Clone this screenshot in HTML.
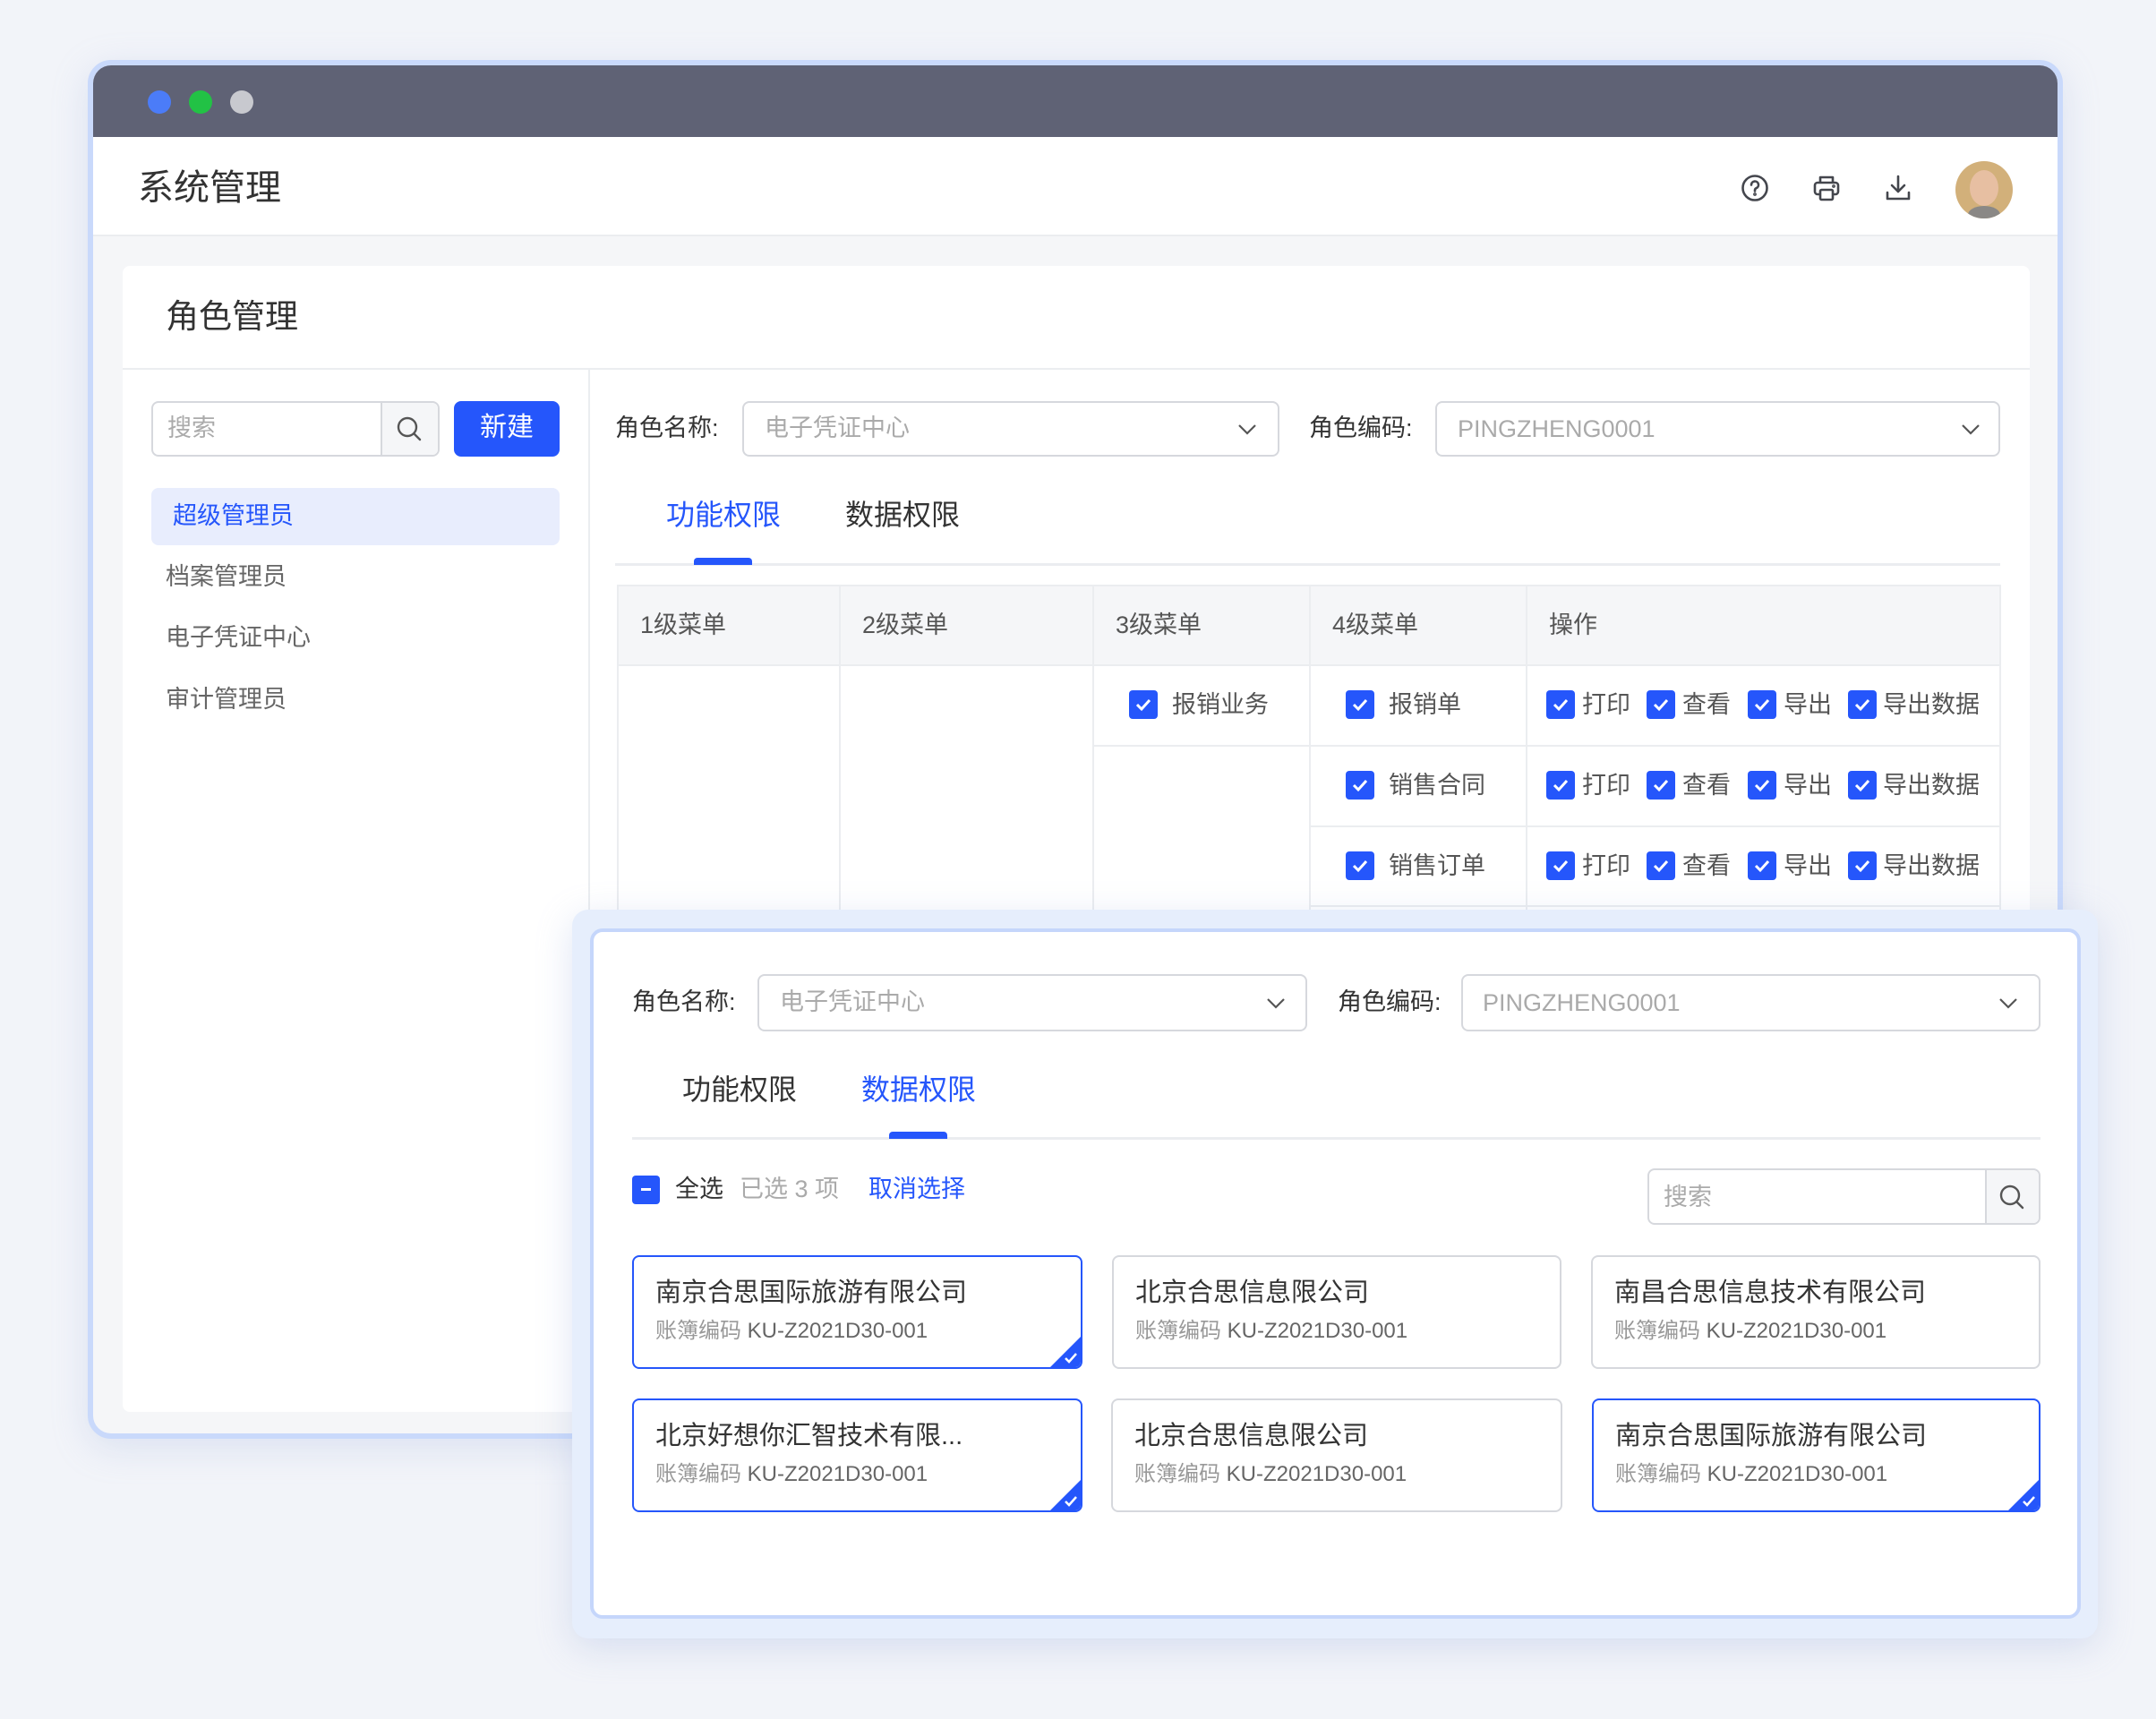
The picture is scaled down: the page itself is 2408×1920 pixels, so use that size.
<!DOCTYPE html>
<html><head><meta charset="utf-8">
<style>
*{box-sizing:border-box;margin:0;padding:0}
body{width:2408px;height:1920px;background:#f2f4f9;font-family:"Liberation Sans","Noto Sans CJK SC",sans-serif;position:relative;overflow:hidden;color:#333}
.a{position:absolute}
.t{position:absolute;white-space:nowrap;line-height:1}
.cb{position:absolute;width:32px;height:32px;background:#2556fb;border-radius:4px}
.cb svg{position:absolute;left:6px;top:7px}
.sel{position:absolute;border:2px solid #d6d8dd;border-radius:8px;background:#fff}
.card{position:absolute;border:2px solid #d6d8dd;border-radius:8px;background:#fff;overflow:hidden}
.card.on{border-color:#2556fb}
.card .n{position:absolute;left:24px;top:16px;font-size:29px;color:#333;white-space:nowrap}
.card .s{position:absolute;left:24px;top:62px;font-size:24px;color:#999;white-space:nowrap}
.card .s b{font-weight:normal;color:#666}
.tri{position:absolute;right:0;bottom:0;width:0;height:0;border-left:34px solid transparent;border-bottom:34px solid #2556fb}
</style></head><body>
<div class="a" style="left:98px;top:67px;width:2206px;height:1540px;border:6px solid #c9d9fb;border-radius:26px;background:#f5f6f8;overflow:hidden;box-shadow:0 10px 40px rgba(150,170,220,.25)">
  <div class="a" style="left:0;top:0;width:100%;height:80px;background:#5f6275"></div>
  <div class="a" style="left:61px;top:28px;width:26px;height:26px;border-radius:50%;background:#4b7cf8"></div>
  <div class="a" style="left:107px;top:28px;width:26px;height:26px;border-radius:50%;background:#22c245"></div>
  <div class="a" style="left:153px;top:28px;width:26px;height:26px;border-radius:50%;background:#c8c9cf"></div>
  <div class="a" style="left:0;top:80px;width:100%;height:111px;background:#fff;border-bottom:2px solid #ebedf0"></div>
  <div class="t" style="left:50px;top:117px;font-size:40px;color:#333">系统管理</div>
  <svg class="a" style="left:1840px;top:121px" width="32" height="32" viewBox="0 0 32 32" fill="none" stroke="#44464d" stroke-width="2.6" stroke-linecap="round"><circle cx="16" cy="16" r="13.5"/><path d="M12 12.5a4 4 0 1 1 5.5 3.7c-1 .5-1.5 1.2-1.5 2.3v1"/><circle cx="16" cy="23" r=".6" fill="#44464d"/></svg>
  <svg class="a" style="left:1920px;top:121px" width="32" height="32" viewBox="0 0 32 32" fill="none" stroke="#44464d" stroke-width="2.6" stroke-linejoin="round"><path d="M9 10V4h14v6"/><rect x="3" y="10" width="26" height="13" rx="3"/><rect x="9" y="18" width="14" height="11" rx="1.5" fill="#fff"/><circle cx="24" cy="14" r=".6" fill="#44464d"/></svg>
  <svg class="a" style="left:2000px;top:121px" width="32" height="32" viewBox="0 0 32 32" fill="none" stroke="#44464d" stroke-width="2.6" stroke-linecap="round" stroke-linejoin="round"><path d="M16 3v17M9 13l7 7 7-7M4 21v7h24v-7"/></svg>
  <div class="a" style="left:2080px;top:107px;width:64px;height:64px;border-radius:50%;overflow:hidden;background:#d2b07a">
    <div class="a" style="left:16px;top:10px;width:32px;height:40px;border-radius:50%;background:#e7bfa2"></div>
    <div class="a" style="left:14px;top:50px;width:36px;height:20px;border-radius:50%;background:#8a8886"></div>
  </div>
  <div class="a" style="left:33px;top:224px;width:2130px;height:1280px;background:#fff;border-radius:8px">
    <div class="t" style="left:48px;top:38px;font-size:37px;color:#333">角色管理</div>
    <div class="a" style="left:0;top:114px;width:100%;height:2px;background:#ebedf0"></div>
    <div class="a" style="left:520px;top:116px;width:2px;height:1200px;background:#ebedf0"></div>
    <div class="sel" style="left:32px;top:151px;width:322px;height:62px;border-radius:8px"></div>
    <div class="a" style="left:288px;top:153px;width:64px;height:58px;background:#f5f6f8;border-left:2px solid #d6d8dd;border-radius:0 7px 7px 0"></div>
    <svg class="a" style="left:304px;top:166px" width="32" height="32" viewBox="0 0 32 32" fill="none" stroke="#555" stroke-width="2.4" stroke-linecap="round"><circle cx="14" cy="14" r="10"/><path d="M21.5 21.5L28 28"/></svg>
    <div class="t" style="left:50px;top:168px;font-size:27px;color:#aaa">搜索</div>
    <div class="a" style="left:370px;top:151px;width:118px;height:62px;background:#2556fb;border-radius:8px"></div>
    <div class="t" style="left:370px;top:166px;width:118px;text-align:center;font-size:30px;color:#fff">新建</div>
    <div class="a" style="left:32px;top:248px;width:456px;height:64px;background:#e8edfd;border-radius:8px"></div>
    <div class="t" style="left:56px;top:266px;font-size:27px;color:#2556fb">超级管理员</div>
    <div class="t" style="left:48px;top:334px;font-size:27px;color:#666">档案管理员</div>
    <div class="t" style="left:48px;top:402px;font-size:27px;color:#666">电子凭证中心</div>
    <div class="t" style="left:48px;top:471px;font-size:27px;color:#666">审计管理员</div>
    <div class="t" style="left:550px;top:168px;font-size:27px;color:#333">角色名称:</div>
    <div class="sel" style="left:692px;top:151px;width:600px;height:62px"></div>
    <div class="t" style="left:717px;top:168px;font-size:27px;color:#aaa">电子凭证中心</div>
    <svg class="a" style="left:1245px;top:175px" width="22" height="14" viewBox="0 0 22 14" fill="none" stroke="#555" stroke-width="2.2"><path d="M2 3l9 9 9-9"/></svg>
    <div class="t" style="left:1325px;top:168px;font-size:27px;color:#333">角色编码:</div>
    <div class="sel" style="left:1466px;top:151px;width:631px;height:62px"></div>
    <div class="t" style="left:1491px;top:169px;font-size:27px;color:#aaa">PINGZHENG0001</div>
    <svg class="a" style="left:2053px;top:175px" width="22" height="14" viewBox="0 0 22 14" fill="none" stroke="#555" stroke-width="2.2"><path d="M2 3l9 9 9-9"/></svg>
    <div class="t" style="left:607px;top:262px;font-size:32px;color:#2556fb">功能权限</div>
    <div class="t" style="left:807px;top:262px;font-size:32px;color:#333">数据权限</div>
    <div class="a" style="left:550px;top:332px;width:1547px;height:3px;background:#ebedf0"></div>
    <div class="a" style="left:638px;top:326px;width:65px;height:8px;background:#2556fb;border-radius:4px 4px 0 0"></div>
    <div class="a" style="left:552px;top:356px;width:1546px;height:900px;border:2px solid #ebedf0;border-bottom:none"></div>
    <div class="a" style="left:554px;top:358px;width:1542px;height:89px;background:#f5f6f8;border-bottom:2px solid #ebedf0"></div>
    <div class="a" style="left:800px;top:358px;width:2px;height:900px;background:#ebedf0"></div>
    <div class="a" style="left:1083px;top:358px;width:2px;height:900px;background:#ebedf0"></div>
    <div class="a" style="left:1325px;top:358px;width:2px;height:900px;background:#ebedf0"></div>
    <div class="a" style="left:1567px;top:358px;width:2px;height:900px;background:#ebedf0"></div>
    <div class="a" style="left:1083px;top:535px;width:1015px;height:2px;background:#ebedf0"></div>
    <div class="a" style="left:1325px;top:625px;width:773px;height:2px;background:#ebedf0"></div>
    <div class="a" style="left:1325px;top:714px;width:773px;height:2px;background:#ebedf0"></div>
    <div class="t" style="left:578px;top:388px;font-size:27px;color:#555">1级菜单</div>
    <div class="t" style="left:826px;top:388px;font-size:27px;color:#555">2级菜单</div>
    <div class="t" style="left:1109px;top:388px;font-size:27px;color:#555">3级菜单</div>
    <div class="t" style="left:1351px;top:388px;font-size:27px;color:#555">4级菜单</div>
    <div class="t" style="left:1593px;top:388px;font-size:27px;color:#555">操作</div>
  </div>
</div>
<div class="cb" style="left:1261px;top:771px"><svg width="20" height="18" viewBox="0 0 20 18" fill="none" stroke="#fff" stroke-width="3"><path d="M3 9l5 5 9-10"/></svg></div>
<div class="t" style="left:1309px;top:774px;font-size:27px;color:#555">报销业务</div>
<div class="cb" style="left:1503px;top:771px"><svg width="20" height="18" viewBox="0 0 20 18" fill="none" stroke="#fff" stroke-width="3"><path d="M3 9l5 5 9-10"/></svg></div>
<div class="t" style="left:1551px;top:774px;font-size:27px;color:#555">报销单</div>
<div class="cb" style="left:1503px;top:861px"><svg width="20" height="18" viewBox="0 0 20 18" fill="none" stroke="#fff" stroke-width="3"><path d="M3 9l5 5 9-10"/></svg></div>
<div class="t" style="left:1551px;top:864px;font-size:27px;color:#555">销售合同</div>
<div class="cb" style="left:1503px;top:951px"><svg width="20" height="18" viewBox="0 0 20 18" fill="none" stroke="#fff" stroke-width="3"><path d="M3 9l5 5 9-10"/></svg></div>
<div class="t" style="left:1551px;top:954px;font-size:27px;color:#555">销售订单</div>

<div class="cb" style="left:1727px;top:771px"><svg width="20" height="18" viewBox="0 0 20 18" fill="none" stroke="#fff" stroke-width="3"><path d="M3 9l5 5 9-10"/></svg></div><div class="t" style="left:1767px;top:774px;font-size:27px;color:#555">打印</div>
<div class="cb" style="left:1839px;top:771px"><svg width="20" height="18" viewBox="0 0 20 18" fill="none" stroke="#fff" stroke-width="3"><path d="M3 9l5 5 9-10"/></svg></div><div class="t" style="left:1879px;top:774px;font-size:27px;color:#555">查看</div>
<div class="cb" style="left:1952px;top:771px"><svg width="20" height="18" viewBox="0 0 20 18" fill="none" stroke="#fff" stroke-width="3"><path d="M3 9l5 5 9-10"/></svg></div><div class="t" style="left:1992px;top:774px;font-size:27px;color:#555">导出</div>
<div class="cb" style="left:2064px;top:771px"><svg width="20" height="18" viewBox="0 0 20 18" fill="none" stroke="#fff" stroke-width="3"><path d="M3 9l5 5 9-10"/></svg></div><div class="t" style="left:2103px;top:774px;font-size:27px;color:#555">导出数据</div>

<div class="cb" style="left:1727px;top:861px"><svg width="20" height="18" viewBox="0 0 20 18" fill="none" stroke="#fff" stroke-width="3"><path d="M3 9l5 5 9-10"/></svg></div><div class="t" style="left:1767px;top:864px;font-size:27px;color:#555">打印</div>
<div class="cb" style="left:1839px;top:861px"><svg width="20" height="18" viewBox="0 0 20 18" fill="none" stroke="#fff" stroke-width="3"><path d="M3 9l5 5 9-10"/></svg></div><div class="t" style="left:1879px;top:864px;font-size:27px;color:#555">查看</div>
<div class="cb" style="left:1952px;top:861px"><svg width="20" height="18" viewBox="0 0 20 18" fill="none" stroke="#fff" stroke-width="3"><path d="M3 9l5 5 9-10"/></svg></div><div class="t" style="left:1992px;top:864px;font-size:27px;color:#555">导出</div>
<div class="cb" style="left:2064px;top:861px"><svg width="20" height="18" viewBox="0 0 20 18" fill="none" stroke="#fff" stroke-width="3"><path d="M3 9l5 5 9-10"/></svg></div><div class="t" style="left:2103px;top:864px;font-size:27px;color:#555">导出数据</div>

<div class="cb" style="left:1727px;top:951px"><svg width="20" height="18" viewBox="0 0 20 18" fill="none" stroke="#fff" stroke-width="3"><path d="M3 9l5 5 9-10"/></svg></div><div class="t" style="left:1767px;top:954px;font-size:27px;color:#555">打印</div>
<div class="cb" style="left:1839px;top:951px"><svg width="20" height="18" viewBox="0 0 20 18" fill="none" stroke="#fff" stroke-width="3"><path d="M3 9l5 5 9-10"/></svg></div><div class="t" style="left:1879px;top:954px;font-size:27px;color:#555">查看</div>
<div class="cb" style="left:1952px;top:951px"><svg width="20" height="18" viewBox="0 0 20 18" fill="none" stroke="#fff" stroke-width="3"><path d="M3 9l5 5 9-10"/></svg></div><div class="t" style="left:1992px;top:954px;font-size:27px;color:#555">导出</div>
<div class="cb" style="left:2064px;top:951px"><svg width="20" height="18" viewBox="0 0 20 18" fill="none" stroke="#fff" stroke-width="3"><path d="M3 9l5 5 9-10"/></svg></div><div class="t" style="left:2103px;top:954px;font-size:27px;color:#555">导出数据</div>

<div class="a" style="left:639px;top:1016px;width:1704px;height:814px;background:#e6eefc;border-radius:18px;box-shadow:0 10px 40px rgba(150,170,220,.3)"></div>
<div class="a" style="left:659px;top:1037px;width:1665px;height:771px;background:#fff;border:4px solid #c5d6fb;border-radius:14px"></div>
<div class="t" style="left:706px;top:1106px;font-size:27px;color:#333">角色名称:</div>
<div class="sel" style="left:846px;top:1088px;width:614px;height:64px"></div>
<div class="t" style="left:871px;top:1106px;font-size:27px;color:#aaa">电子凭证中心</div>
<svg class="a" style="left:1414px;top:1113px" width="22" height="14" viewBox="0 0 22 14" fill="none" stroke="#555" stroke-width="2.2"><path d="M2 3l9 9 9-9"/></svg>
<div class="t" style="left:1494px;top:1106px;font-size:27px;color:#333">角色编码:</div>
<div class="sel" style="left:1632px;top:1088px;width:647px;height:64px"></div>
<div class="t" style="left:1656px;top:1107px;font-size:27px;color:#aaa">PINGZHENG0001</div>
<svg class="a" style="left:2232px;top:1113px" width="22" height="14" viewBox="0 0 22 14" fill="none" stroke="#555" stroke-width="2.2"><path d="M2 3l9 9 9-9"/></svg>
<div class="t" style="left:762px;top:1201px;font-size:32px;color:#333">功能权限</div>
<div class="t" style="left:962px;top:1201px;font-size:32px;color:#2556fb">数据权限</div>
<div class="a" style="left:706px;top:1270px;width:1573px;height:3px;background:#ebedf0"></div>
<div class="a" style="left:993px;top:1264px;width:65px;height:8px;background:#2556fb;border-radius:4px 4px 0 0"></div>
<div class="cb" style="left:706px;top:1313px;width:31px"><div class="a" style="left:10px;top:14px;width:11px;height:3px;background:#fff"></div></div>
<div class="t" style="left:754px;top:1315px;font-size:27px;color:#333">全选</div>
<div class="t" style="left:826px;top:1315px;font-size:27px;color:#aaa">已选 3 项</div>
<div class="t" style="left:970px;top:1315px;font-size:27px;color:#2556fb">取消选择</div>
<div class="sel" style="left:1840px;top:1305px;width:439px;height:63px"></div>
<div class="a" style="left:2217px;top:1307px;width:60px;height:59px;background:#f5f6f8;border-left:2px solid #d6d8dd;border-radius:0 7px 7px 0"></div>
<svg class="a" style="left:2231px;top:1321px" width="32" height="32" viewBox="0 0 32 32" fill="none" stroke="#555" stroke-width="2.4" stroke-linecap="round"><circle cx="14" cy="14" r="10"/><path d="M21.5 21.5L28 28"/></svg>
<div class="t" style="left:1858px;top:1324px;font-size:27px;color:#aaa">搜索</div>

<div class="card on" style="left:706px;top:1402px;width:503px;height:127px"><div class="n">南京合思国际旅游有限公司</div><div class="s">账簿编码 <b>KU-Z2021D30-001</b></div><div class="tri"></div><svg class="a" style="right:3px;bottom:4px" width="16" height="13" viewBox="0 0 16 13" fill="none" stroke="#fff" stroke-width="2.5"><path d="M2 7l4 4 8-9"/></svg></div>
<div class="card" style="left:1242px;top:1402px;width:502px;height:127px"><div class="n">北京合思信息限公司</div><div class="s">账簿编码 <b>KU-Z2021D30-001</b></div></div>
<div class="card" style="left:1777px;top:1402px;width:502px;height:127px"><div class="n">南昌合思信息技术有限公司</div><div class="s">账簿编码 <b>KU-Z2021D30-001</b></div></div>
<div class="card on" style="left:706px;top:1562px;width:503px;height:127px"><div class="n">北京好想你汇智技术有限...</div><div class="s">账簿编码 <b>KU-Z2021D30-001</b></div><div class="tri"></div><svg class="a" style="right:3px;bottom:4px" width="16" height="13" viewBox="0 0 16 13" fill="none" stroke="#fff" stroke-width="2.5"><path d="M2 7l4 4 8-9"/></svg></div>
<div class="card" style="left:1241px;top:1562px;width:504px;height:127px"><div class="n">北京合思信息限公司</div><div class="s">账簿编码 <b>KU-Z2021D30-001</b></div></div>
<div class="card on" style="left:1778px;top:1562px;width:501px;height:127px"><div class="n">南京合思国际旅游有限公司</div><div class="s">账簿编码 <b>KU-Z2021D30-001</b></div><div class="tri"></div><svg class="a" style="right:3px;bottom:4px" width="16" height="13" viewBox="0 0 16 13" fill="none" stroke="#fff" stroke-width="2.5"><path d="M2 7l4 4 8-9"/></svg></div>
</body></html>
